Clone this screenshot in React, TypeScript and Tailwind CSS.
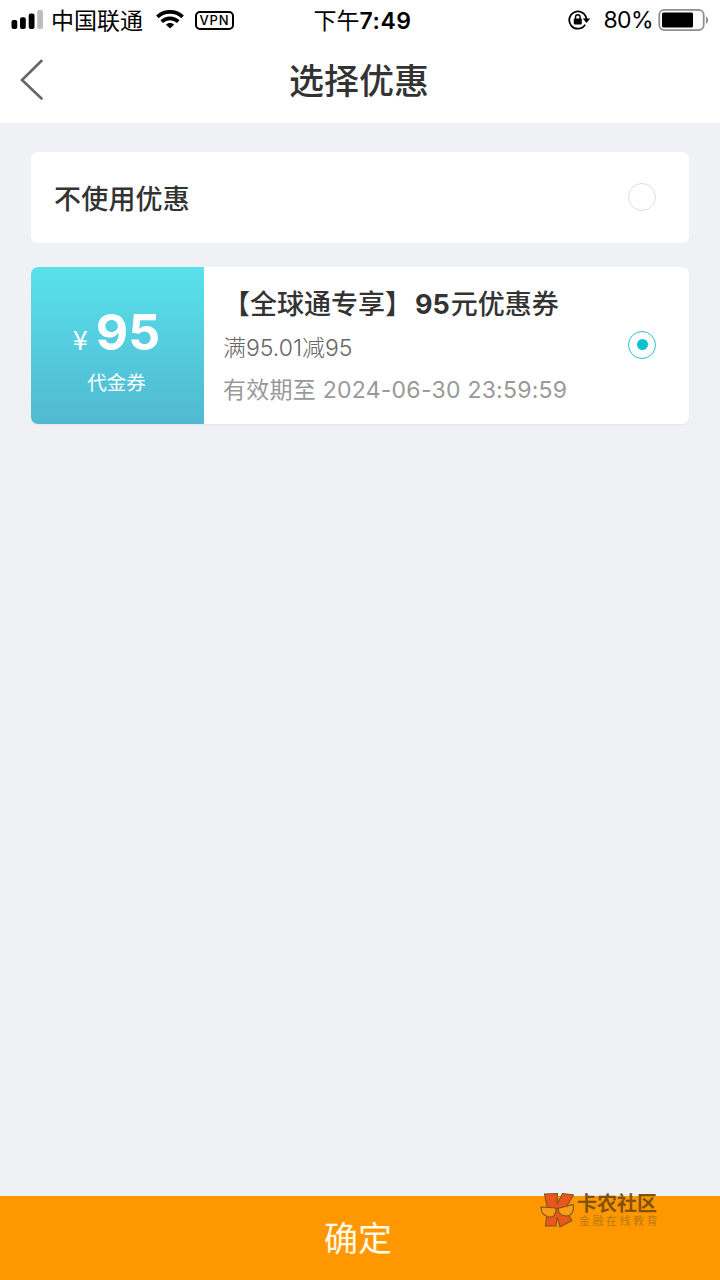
import React, { useState } from 'react';

interface Coupon {
  id: string;
  amount: number;
  kind: string;
  title: [string, string, string];
  condition: string;
  expires: string;
}

const coupons: Coupon[] = [
  {
    id: 'gotone-95',
    amount: 95,
    kind: '代金券',
    title: ['【全球通专享】', '95', '元优惠券'],
    condition: '满95.01减95',
    expires: '2024-06-30 23:59:59',
  },
];

function SignalIcon() {
  return (
    <svg className="h-5 w-8 shrink-0" viewBox="0 0 32 20" fill="#000">
      <rect x="0.5" y="10" width="5.8" height="9" rx="2" />
      <rect x="9" y="7.2" width="5.8" height="11.8" rx="2" />
      <rect x="17.7" y="3.4" width="5.8" height="15.6" rx="2" />
      <rect x="26.2" y="0" width="5.8" height="19" rx="2" fill="#bdbdbd" />
    </svg>
  );
}

function WifiIcon() {
  return (
    <svg className="h-5 w-7 shrink-0" viewBox="0 0 28 20" fill="none" stroke="#000" strokeWidth="3.7">
      <path d="M1.4 6.9C8.5 .3 19.5 .3 26.6 6.9" />
      <path d="M5.7 11.7C10.4 7.3 17.6 7.3 22.3 11.7" />
      <path d="M14 18.6L9.8 14.6C12.1 12.5 15.9 12.5 18.2 14.6Z" fill="#000" stroke="none" />
    </svg>
  );
}

function RotationLockIcon() {
  return (
    <svg className="h-5 w-6 shrink-0" viewBox="0 0 24 20" fill="none" stroke="#000">
      <path d="M17.2 14.6A8.6 8.6 0 1 1 18.4 9" strokeWidth="1.8" />
      <path d="M14.8 8.4H22.2L18.5 13Z" fill="#000" stroke="none" />
      <rect x="5.8" y="8.6" width="8" height="5.8" rx="0.8" fill="#000" stroke="none" />
      <path d="M7.5 9V7A2.3 2.3 0 0 1 12.1 7V9" strokeWidth="1.4" />
    </svg>
  );
}

function BatteryIcon() {
  return (
    <svg className="h-6 w-[52px] shrink-0" viewBox="0 0 52 24">
      <rect x="1.3" y="1.9" width="44.4" height="20.2" rx="5" fill="#fff" stroke="#8e8e8e" strokeWidth="1.8" />
      <rect x="4" y="4.6" width="31" height="14.8" rx="1.5" fill="#000" />
      <path d="M48 8.6C50.8 9.6 50.8 14.8 48 15.8Z" fill="#8e8e8e" />
    </svg>
  );
}

function StatusBar() {
  return (
    <div className="grid h-10 grid-cols-[1fr_auto_1fr] items-center pl-[11px] pr-[10px] text-[23px] leading-none text-black">
      <div className="flex items-center">
        <SignalIcon />
        <span className="ml-2 pt-0.5">中国联通</span>
        <span className="ml-[13px] flex">
          <WifiIcon />
        </span>
        <span className="ml-[11px] flex h-[19px] w-[39px] items-center justify-center rounded-[5px] border-2 border-black text-[13px] font-medium tracking-[0.8px]">
          VPN
        </span>
      </div>
      <div className="flex items-center pl-1 pt-0.5">
        <span>下午</span>
        <span className="font-semibold tracking-[0.5px]">7:49</span>
      </div>
      <div className="flex items-center justify-end">
        <RotationLockIcon />
        <span className="ml-[11px] mr-[5px] pt-px tracking-[-0.6px]">80%</span>
        <BatteryIcon />
      </div>
    </div>
  );
}

function Radio({ checked }: { checked: boolean }) {
  return (
    <span
      className={`mr-px mb-[2px] flex size-[28px] shrink-0 items-center justify-center rounded-full border ${
        checked ? 'border-[#25c5cf]' : 'border-[#dedede]'
      }`}
    >
      {checked && <span className="size-[11px] rounded-full bg-[#0cc4d0]" />}
    </span>
  );
}

function CouponCard({ coupon, checked, onSelect }: { coupon: Coupon; checked: boolean; onSelect: () => void }) {
  return (
    <button
      onClick={onSelect}
      className="flex h-[157px] w-full items-center overflow-hidden rounded-[7px] bg-white pr-8 text-left shadow-[0_1px_1px_rgba(0,0,0,0.05)]"
    >
      <div className="flex h-full w-[173px] shrink-0 flex-col items-center bg-linear-to-b from-[#59e1eb] to-[#50b9d1] pt-[39px] text-white">
        <div className="flex items-baseline gap-2 pr-0.5 leading-[52px]">
          <span className="font-['Noto_Sans_CJK_SC'] text-[27px] leading-none">¥</span>
          <span className="text-[50px] font-bold">{coupon.amount}</span>
        </div>
        <span className="mt-[11px] pr-0.5 text-[19.5px] leading-7">{coupon.kind}</span>
      </div>
      <div className="flex h-full flex-1 flex-col pl-[19px] pt-[18px]">
        <div className="flex text-[27px] font-medium leading-10 text-[#333]">
          <span>{coupon.title[0]}</span>
          <span className="ml-[3px] mr-px font-bold">{coupon.title[1]}</span>
          <span>{coupon.title[2]}</span>
        </div>
        <span className="mt-[5px] text-[23px] font-light leading-9 text-[#666]">{coupon.condition}</span>
        <span className="mt-1.5 text-[23px] leading-9 tracking-[0.25px] text-[#999]">有效期至 {coupon.expires}</span>
      </div>
      <Radio checked={checked} />
    </button>
  );
}

function CommunityMark() {
  return (
    <div className="absolute -top-[4px] left-[540px] flex items-center">
      <svg className="h-9 w-[35px] shrink-0" viewBox="0 0 35 36" stroke="#7b571d" strokeWidth="1.1">
        <path d="M4.5 2L17.5 1.5L17 12L22.5 1.5L33.5 3L25 17L32 28.5L20 35L17 25L16 34H5.5L7.5 17Z" fill="#ed561b" />
        <path d="M1 15L16 16C16.5 23 13 25.5 9 25C3.5 24 1 20 1 15Z" fill="#f99d17" />
        <path d="M18 16.5L33 12.5C34.5 19.5 31.5 23.5 26.5 24C21.5 24 18.5 21 18 16.5Z" fill="#f99d17" />
        <path d="M15 16.8L18 16.5" fill="none" />
      </svg>
      <div className="ml-[2px] flex flex-col pt-px text-[#80520c]">
        <span className="text-[20px] font-bold leading-[22px]">卡农社区</span>
        <span className="text-[11px] leading-[13px] tracking-[2.5px] pl-0.5 text-[#b97810]">金融在线教育</span>
      </div>
    </div>
  );
}

export default function App() {
  const [selected, setSelected] = useState<string | null>('gotone-95');

  return (
    <div className="flex h-screen w-full flex-col overflow-hidden bg-[#eff1f5] font-[Inter,'Noto_Sans_CJK_SC',sans-serif]">
      <header className="h-[123px] shrink-0 bg-white">
        <StatusBar />
        <div className="grid h-20 grid-cols-[1fr_auto_1fr] items-center">
          <button className="pl-5" aria-label="返回">
            <svg className="h-[42px] w-6" viewBox="0 0 24 42" fill="none" stroke="#666" strokeWidth="2.6" strokeLinecap="round">
              <path d="M21.5 1.8L2 21L21.5 39.5" />
            </svg>
          </button>
          <h1 className="pr-0.5 pt-0.5 text-[35px] font-medium leading-none text-[#333]">选择优惠</h1>
        </div>
      </header>

      <main className="flex flex-1 flex-col gap-6 px-[31px] pt-[29px]">
        <button
          onClick={() => setSelected(null)}
          className="flex h-[91px] w-full items-center justify-between rounded-[7px] bg-white pl-[23px] pr-8 text-[27px] font-medium text-[#333]"
        >
          <span className="pt-1.5 tracking-[0.2px]">不使用优惠</span>
          <Radio checked={selected === null} />
        </button>
        {coupons.map((coupon) => (
          <CouponCard
            key={coupon.id}
            coupon={coupon}
            checked={selected === coupon.id}
            onSelect={() => setSelected(coupon.id)}
          />
        ))}
      </main>

      <footer className="relative h-[84px] shrink-0">
        <button className="h-full w-full bg-[#ff9800] pr-1 text-[34px] text-[#fff8e8]">确定</button>
        <CommunityMark />
      </footer>
    </div>
  );
}
